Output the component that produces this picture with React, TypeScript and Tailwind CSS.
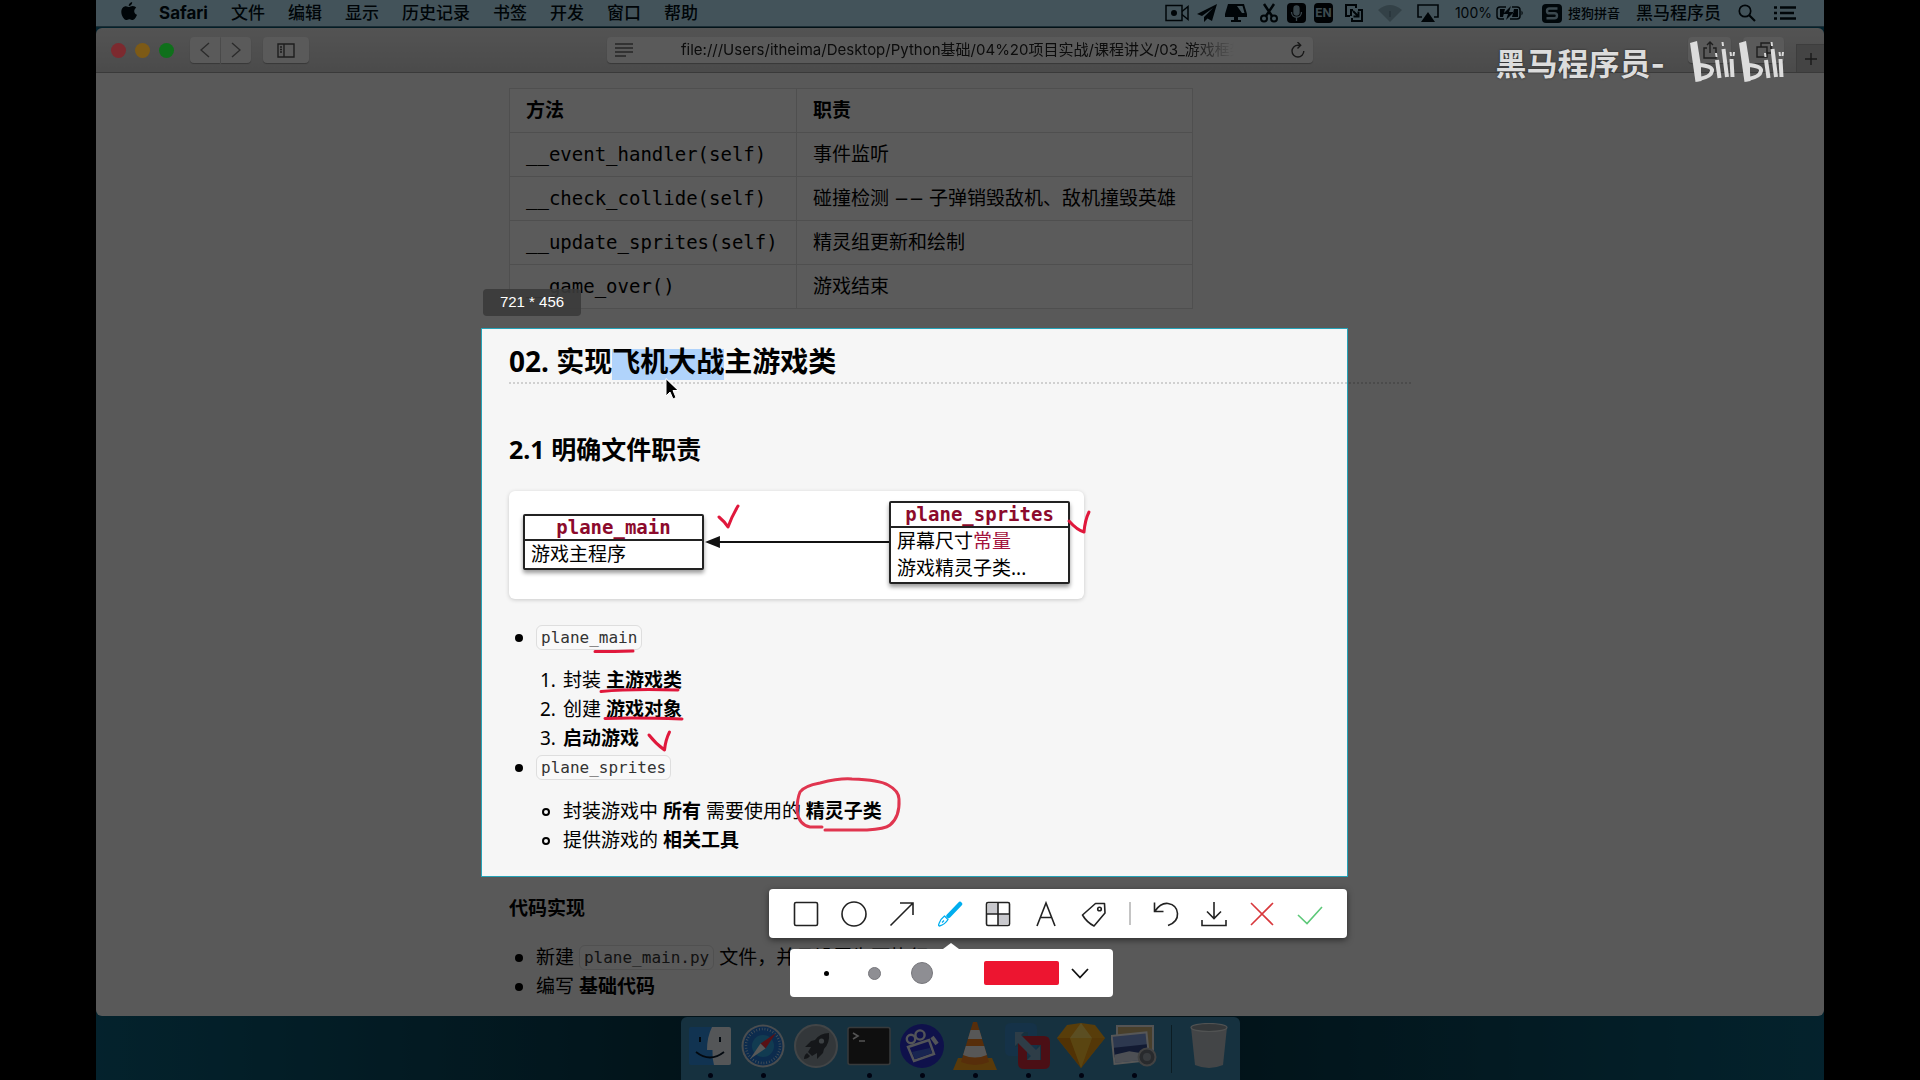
import type { ReactNode } from "react";

const MENUS = ["文件", "编辑", "显示", "历史记录", "书签", "开发", "窗口", "帮助"];

const METHODS: [string, ReactNode][] = [
  ["__event_handler(self)", "事件监听"],
  [
    "__check_collide(self)",
    <>
      碰撞检测 <span className="font-['DejaVu_Sans',sans-serif] text-[18px]">−−</span> 子弹销毁敌机、敌机撞毁英雄
    </>,
  ],
  ["__update_sprites(self)", "精灵组更新和绘制"],
  ["__game_over()", "游戏结束"],
];

const URL_TEXT =
  "file:///Users/itheima/Desktop/Python基础/04%20项目实战/课程讲义/03_游戏框架搭建.html";

function AppleLogo() {
  return (
    <svg viewBox="0 0 16 19" className="h-[19px] w-4" fill="currentColor" aria-hidden="true">
      <path d="M11.2 0c.2 1.900-1.500 4-3.500 4C7.400 2.200 9.200.2 11.200 0zM8.200 5c.7 0 1.800-1 3.500-1 1.600 0 2.800.8 3.500 1.800-2.900 1.700-2.500 5.800.8 7-.8 2.300-2.600 5.200-4.300 5.200-1.300 0-1.700-.8-3.300-.8s-2.100.8-3.300.8C3 18 .3 13.700.3 10.100.3 6.300 2.600 4.200 4.900 4.200 6.400 4.200 7.500 5 8.200 5z" />
    </svg>
  );
}

function MenuBar() {
  return (
    <header className="flex h-[27px] shrink-0 items-center border-b border-[#4b7c92] bg-[#bbe6f8] pl-[25px] pr-7 text-[17px] leading-[26px] text-[#001018]">
      <button aria-label="Apple" className="-mt-1">
        <AppleLogo />
      </button>
      <nav className="ml-[22px] flex items-center gap-[23px] whitespace-nowrap">
        <button className="font-bold">Safari</button>
        {MENUS.map((m) => (
          <button key={m} className="font-medium">
            {m}
          </button>
        ))}
      </nav>
      <div className="ml-auto flex items-center whitespace-nowrap">
        <svg viewBox="0 0 24 18" className="h-[18px] w-6" fill="none" stroke="currentColor" strokeWidth="1.500">
          <rect x="1" y="1.500" width="16" height="15" />
          <path d="M17 7.500l6-5v13l-6-5" />
          <circle cx="9" cy="9" r="3" fill="currentColor" stroke="none" />
        </svg>
        <svg viewBox="0 0 20 18" className="ml-2 h-[18px] w-5" fill="currentColor">
          <path d="M20 0L0 10l5 2L16 4 7 13v5l3.500-3.500L15 17z" />
        </svg>
        <svg viewBox="0 0 22 18" className="ml-2 h-[18px] w-[22px]" fill="currentColor">
          <path fillRule="evenodd" d="M3 0h16l3 10v3H0v-3zM12 2l5 7h2.500L17.500 2z" />
          <path d="M9 13h4v3h3v2H6v-2h3z" />
        </svg>
        <svg viewBox="0 0 18 20" className="ml-[13px] h-5 w-[18px]" fill="none" stroke="currentColor" strokeWidth="2">
          <circle cx="4" cy="15.500" r="3" />
          <circle cx="14" cy="15.500" r="3" />
          <path d="M6 13L14 1M12 13L4 1" strokeWidth="2.500" />
        </svg>
        <svg viewBox="0 0 19 20" className="ml-[9px] h-5 w-[19px]">
          <rect width="19" height="20" rx="4" fill="#00060c" />
          <g fill="none" stroke="#9cc0d0" strokeWidth="1.300">
            <rect x="7" y="3" width="5" height="9" rx="2.500" fill="#9cc0d0" />
            <path d="M4.500 9c0 7 10 7 10 0M9.500 14.500V18" />
          </g>
        </svg>
        <span className="ml-2 flex h-5 w-[19px] items-center justify-center rounded bg-[#00060c] text-[12px] font-bold text-[#a8ccdc]">
          EN
        </span>
        <svg viewBox="0 0 18 18" className="ml-3 h-[18px] w-[18px]" fill="none" stroke="currentColor" strokeWidth="2">
          <path d="M5 12H1V1h10v3M8 6H6v6M13 6h4v11H7v-3" />
          <path d="M8 7l5 5M13.500 7.500v5h-5" />
        </svg>
        <svg viewBox="0 0 24 17" className="ml-[15px] h-[17px] w-6 text-[#8fb4c4]" fill="currentColor">
          <path d="M0 5Q12-5 24 5L12 17z" />
          <path d="M12 6v6" stroke="#6b909f" strokeWidth="1.500" />
        </svg>
        <svg viewBox="0 0 22 18" className="ml-[15px] h-[18px] w-[22px]" fill="currentColor">
          <path d="M5 13H1V1h20v12h-4" fill="none" stroke="currentColor" strokeWidth="1.600" />
          <path d="M11 8l7 10H4z" />
        </svg>
        <span className="ml-4 text-[14px]">100%</span>
        <svg viewBox="0 0 28 14" className="ml-1 h-[14px] w-7" fill="currentColor">
          <path d="M10 1H4Q1 1 1 4v6q0 3 3 3h4M16 1h5q3 0 3 3v6q0 3-3 3h-7" fill="none" stroke="currentColor" strokeWidth="1.500" />
          <path d="M9 3H4v8h3zM18 3h4v8h-6zM15 0L7 8h5l-2 6 8-8h-5zM25.500 4.500q2.500 2.500 0 5z" />
        </svg>
        <svg viewBox="0 0 20 19" className="ml-[18px] h-[19px] w-5">
          <rect width="20" height="19" rx="4" fill="#00141e" />
          <path d="M15.500 4.500H7.500q-2.500 0-2.500 2.400t2.500 2.400h5q2.500 0 2.500 2.500t-2.500 2.500H4.500" fill="none" stroke="#a4cbdc" strokeWidth="2.400" />
        </svg>
        <span className="ml-[6px] text-[13px] font-medium">搜狗拼音</span>
        <span className="ml-4 font-medium">黑马程序员</span>
        <svg viewBox="0 0 18 18" className="ml-[17px] h-[18px] w-[18px]" fill="none" stroke="currentColor" strokeWidth="1.700">
          <circle cx="7" cy="7" r="5.700" />
          <path d="M11 11l6 6" strokeWidth="2.200" />
        </svg>
        <svg viewBox="0 0 22 14" className="ml-[18px] h-[14px] w-[22px]" stroke="currentColor" strokeWidth="2.400">
          <path d="M6 1.500h16M6 7h14M6 12.500h16M0 1.500h3M0 7h3M0 12.500h3" />
        </svg>
      </div>
    </header>
  );
}

function ToolbarButton({ label, className, children }: { label: string; className: string; children: ReactNode }) {
  return (
    <button
      aria-label={label}
      className={`flex h-[26px] items-center justify-center bg-[#f8f8f8] text-[#505050] shadow-[0_1px_1px_#9a9a9a] ${className}`}
    >
      {children}
    </button>
  );
}

function BrowserToolbar() {
  return (
    <div className="flex h-[45px] shrink-0 items-center border-b border-[#a2a2a2] bg-gradient-to-b from-[#e6e6e6] to-[#cfcfcf]">
      <div className="flex flex-1 items-center">
        <div className="relative z-20 ml-[15px] flex gap-[9px]">
          <button aria-label="关闭" className="size-[15px] rounded-full bg-[#7c2a2f]" />
          <button aria-label="最小化" className="size-[15px] rounded-full bg-[#7d5a16]" />
          <button aria-label="全屏" className="size-[15px] rounded-full bg-[#0f701b]" />
        </div>
        <div className="ml-4 flex gap-px">
          <ToolbarButton label="后退" className="w-[30px] rounded-l">
            <svg viewBox="0 0 10 16" className="h-4 w-[10px]" fill="none" stroke="#777" strokeWidth="1.400">
              <path d="M9 1L1 8l8 7" />
            </svg>
          </ToolbarButton>
          <ToolbarButton label="前进" className="w-[30px] rounded-r">
            <svg viewBox="0 0 10 16" className="h-4 w-[10px]" fill="none" stroke="#777" strokeWidth="1.400">
              <path d="M1 1l8 7-8 7" />
            </svg>
          </ToolbarButton>
        </div>
        <ToolbarButton label="边栏" className="ml-3 w-[46px] rounded">
          <svg viewBox="0 0 18 15" className="h-[15px] w-[18px]" fill="none" stroke="currentColor" strokeWidth="1.400">
            <path d="M1 1h16v13H1zM7 1v13M3 4h2M3 6.500h2M3 9h2" />
          </svg>
        </ToolbarButton>
      </div>
      <div className="flex h-[26px] w-[706px] items-center rounded bg-[#f8f8f8] shadow-[0_1px_1px_#9a9a9a]">
        <svg viewBox="0 0 18 14" className="ml-2 h-[14px] w-[18px]" stroke="#666" strokeWidth="1.500">
          <path d="M0 1h18M0 5h18M0 9h18M0 13h11" />
        </svg>
        <input
          aria-label="地址"
          readOnly
          value={URL_TEXT}
          className="ml-12 w-0 flex-1 bg-transparent text-[15px] text-[#222] [mask-image:linear-gradient(to_right,black_92%,transparent)]"
        />
        <button aria-label="重新载入" className="ml-[57px] mr-2">
          <svg viewBox="0 0 14 16" className="h-4 w-[14px]" fill="none" stroke="#444" strokeWidth="1.400">
            <path d="M12.800 9A5.900 5.900 0 1 1 7 3.200h2M6.500 0l3.200 3.200-3.200 3.200" />
          </svg>
        </button>
      </div>
      <div className="flex flex-1 items-center justify-end self-stretch">
        <ToolbarButton label="共享" className="w-[43px] rounded">
          <svg viewBox="0 0 14 18" className="h-[18px] w-[14px]" fill="none" stroke="currentColor" strokeWidth="1.400">
            <path d="M4 7H1v10h12V7h-3M7 12V1M4 4l3-3 3 3" />
          </svg>
        </ToolbarButton>
        <ToolbarButton label="标签页" className="ml-3 w-[41px] rounded">
          <svg viewBox="0 0 16 16" className="size-4" fill="none" stroke="currentColor" strokeWidth="1.400">
            <path d="M1 5h10v10H1zM5 5V1h10v10h-4" />
          </svg>
        </ToolbarButton>
        <button
          aria-label="新建标签页"
          className="ml-3 flex h-[28px] w-7 items-center justify-center self-end border-l border-t border-[#aaa] bg-[#bdbdbd] text-[#444]"
        >
          <svg viewBox="0 0 12 12" className="size-3" stroke="currentColor" strokeWidth="1.400">
            <path d="M6 0v12M0 6h12" />
          </svg>
        </button>
      </div>
    </div>
  );
}

function Code({ children }: { children: ReactNode }) {
  return (
    <code className="my-[2px] inline-block h-[25px] rounded-md border border-[#dedede] bg-[#f9f9f9] px-1 align-top font-['DejaVu_Sans_Mono','Noto_Sans_CJK_SC',monospace] text-[16px] leading-[23px] text-[#333]">
      {children}
    </code>
  );
}

function ClassBox({ name, children }: { name: string; children: ReactNode }) {
  return (
    <div className="w-[181px] shrink-0 rounded-xs border-2 border-[#222] bg-white shadow-[0_3px_4px_rgba(0,0,0,0.4)]">
      <div className="border-b-2 border-[#222] text-center font-['DejaVu_Sans_Mono',monospace] text-[19px] leading-[23px] font-bold text-[#8c0a2c]">
        {name}
      </div>
      <div className="pl-[6px] text-[19px] leading-[27px]">{children}</div>
    </div>
  );
}

function Dot() {
  return <span className="mt-[11px] mr-[13px] ml-[6px] size-2 shrink-0 rounded-full bg-black" />;
}

function Ring() {
  return <span className="mt-[11px] mr-[13px] ml-[6px] size-2 shrink-0 rounded-full border-2 border-black" />;
}

function Article() {
  return (
    <main className="flex-1 overflow-hidden bg-[#f6f6f6] pt-[15px] font-['Noto_Sans','Noto_Sans_CJK_SC',sans-serif] text-[19px] leading-[29px] text-black">
      <article className="mx-auto max-w-[902px]">
        <table className="border-collapse border border-[#dcdcdc] bg-[#fbfbfb] text-left">
          <thead>
            <tr className="h-11">
              <th className="w-[287px] border border-[#dcdcdc] px-4 font-bold">方法</th>
              <th className="border border-[#dcdcdc] px-4 font-bold">职责</th>
            </tr>
          </thead>
          <tbody>
            {METHODS.map(([name, duty]) => (
              <tr key={name} className="h-11 whitespace-nowrap">
                <td className="border border-[#dcdcdc] px-4 font-['DejaVu_Sans_Mono',monospace]">{name}</td>
                <td className="border border-[#dcdcdc] px-4">{duty}</td>
              </tr>
            ))}
          </tbody>
        </table>

        <h2 className="mt-8 border-b-2 border-dotted border-[#d0d0d0] pb-px text-[28px] leading-10 font-bold">
          02. 实现<mark className="bg-transparent bg-[linear-gradient(transparent_7px,#b0d3fb_7px)] text-black">飞机大战</mark>主游戏类
        </h2>
        <h3 className="mt-[47px] text-[25px] leading-9 font-bold">2.1 明确文件职责</h3>

        <figure className="mt-6 flex h-[108px] w-[575px] items-start rounded-md bg-white px-[14px] pt-[10px] shadow-[0_1px_4px_rgba(0,0,0,0.18)]">
          <div className="mt-[13px]">
            <ClassBox name="plane_main">游戏主程序</ClassBox>
          </div>
          <svg viewBox="0 0 186 14" className="mt-[34px] h-[14px] min-w-0 flex-1" aria-hidden="true">
            <path d="M14 7h172" stroke="#111" strokeWidth="2" />
            <path d="M1 7l15-6v12z" fill="#111" />
          </svg>
          <ClassBox name="plane_sprites">
            屏幕尺寸<span className="text-[#a3123c]">常量</span>
            <br />
            游戏精灵子类...
          </ClassBox>
        </figure>

        <ul className="mt-6">
          <li className="flex">
            <Dot />
            <div>
              <p className="h-[29px]">
                <Code>plane_main</Code>
              </p>
              <ol className="mt-[14px] [&_li]:flex">
                <li>
                  <span className="w-[27px] pl-1">1.</span>
                  <span>
                    封装 <strong>主游戏类</strong>
                  </span>
                </li>
                <li>
                  <span className="w-[27px] pl-1">2.</span>
                  <span>
                    创建 <strong>游戏对象</strong>
                  </span>
                </li>
                <li>
                  <span className="w-[27px] pl-1">3.</span>
                  <strong>启动游戏</strong>
                </li>
              </ol>
            </div>
          </li>
          <li className="flex">
            <Dot />
            <div>
              <p className="h-[29px]">
                <Code>plane_sprites</Code>
              </p>
              <ul className="mt-[15px] [&_li]:flex">
                <li>
                  <Ring />
                  <span>
                    封装游戏中 <strong>所有</strong> 需要使用的 <strong>精灵子类</strong>
                  </span>
                </li>
                <li>
                  <Ring />
                  <span>
                    提供游戏的 <strong>相关工具</strong>
                  </span>
                </li>
              </ul>
            </div>
          </li>
        </ul>

        <h4 className="mt-[39px] font-bold">代码实现</h4>
        <ul className="mt-5">
          <li className="flex">
            <Dot />
            <span className="h-[29px]">
              新建 <Code>plane_main.py</Code> 文件，并且设置为可执行
            </span>
          </li>
          <li className="flex">
            <Dot />
            <span>
              编写 <strong>基础代码</strong>
            </span>
          </li>
        </ul>
      </article>
    </main>
  );
}

function Finder() {
  return (
    <svg viewBox="0 0 44 44" className="size-11">
      <rect x="1" y="3" width="42" height="38" rx="2" fill="#2f8fe0" />
      <path d="M24 3h17q2 0 2 2v34q0 2-2 2H26q-2-7-1.500-15H19Q19 13 24 3z" fill="#e8eef4" />
      <path d="M12 13v5M32 13v5" stroke="#0a1a2c" strokeWidth="2" />
      <path d="M8 28q14 11 28 0" fill="none" stroke="#0a1a2c" strokeWidth="1.800" />
    </svg>
  );
}

function SafariIcon() {
  return (
    <svg viewBox="0 0 44 44" className="size-11">
      <circle cx="22" cy="22" r="21.500" fill="#ccd4da" />
      <circle cx="22" cy="22" r="19.500" fill="#2277d4" />
      <circle cx="22" cy="22" r="11" fill="#2fa5e0" />
      <circle cx="22" cy="22" r="17" fill="none" stroke="#bcdcf4" strokeWidth="2.500" strokeDasharray=".8 2" />
      <path d="M35 9L19.500 19.500l5 5z" fill="#f0303c" />
      <path d="M9 35l10.500-15.500 5 5z" fill="#f4f4f4" />
    </svg>
  );
}

function Launchpad() {
  return (
    <svg viewBox="0 0 44 44" className="size-11">
      <circle cx="22" cy="22" r="21" fill="#8f9aa0" stroke="#b8c0c4" strokeWidth="2" />
      <path d="M35 9q-9 0-14 7l-4 1-6 6 6 0-3 5 4 4 5-3v6l6-6 1-4q6-6 5-16z" fill="#3a4248" />
      <circle cx="27.500" cy="17" r="2.600" fill="#a8b4bc" />
      <path d="M13 29q-3 2-3 6 4 0 6-3z" fill="#3a4248" />
    </svg>
  );
}

function Terminal() {
  return (
    <svg viewBox="0 0 44 44" className="size-11">
      <rect x="1" y="3.500" width="42" height="37" rx="2" fill="#2a2a2a" stroke="#9aa0a4" strokeWidth="1.500" />
      <path d="M6 9l5 3-5 3M12 17h6" fill="none" stroke="#e8e8e8" strokeWidth="1.600" />
    </svg>
  );
}

function Camcorder() {
  return (
    <svg viewBox="0 0 44 44" className="size-11">
      <circle cx="22" cy="22" r="22" fill="#2a2fd0" />
      <g fill="none" stroke="#e4e8f4" strokeWidth="2.400">
        <circle cx="11" cy="15" r="4.200" />
        <circle cx="20" cy="11" r="4.600" />
        <path d="M8 23l21-7 5 14-20 7z" />
        <path d="M32 13l5 7" strokeWidth="4" />
      </g>
      <path d="M12 28l18-4 2 5-17 6z" fill="#4468e0" />
    </svg>
  );
}

function Cone() {
  return (
    <svg viewBox="0 0 44 48" className="h-12 w-11">
      <path d="M5 36h34l5 12H0z" fill="#f5a01c" />
      <path d="M20 0h4l12 40q-14 6-28 0z" fill="#f08020" />
      <path d="M17.600 8h8.800l2.700 9H14.900zM12.800 24h18.400l2.700 9q-12 5-23.800 0z" fill="#f2f2f2" />
    </svg>
  );
}

function Vmware() {
  return (
    <svg viewBox="0 0 46 46" className="h-[46px] w-[46px]">
      <path fillRule="evenodd" d="M6 0h20q6 0 6 6v21q0 6-6 6H6q-6 0-6-6V6q0-6 6-6zM10 9v15h13V9z" fill="#3a8ac8" />
      <path fillRule="evenodd" d="M19 13h20q6 0 6 6v21q0 6-6 6H19q-6 0-6-6V19q0-6 6-6zM22 22v15h14V22z" fill="#d02c3c" />
      <path d="M10 9h9l-3 3 15 15 4-4v14H22l4-4-13-13-3 3z" fill="#7fa8c4" />
    </svg>
  );
}

function Diamond() {
  return (
    <svg viewBox="0 0 48 46" className="h-[46px] w-12">
      <path d="M10 2L24 0l14 2 10 13-24 30L0 15z" fill="#f4a81c" />
      <path d="M24 0l11 15H13z" fill="#fcd860" />
      <path d="M0 15h13l11 30z" fill="#e08c10" />
      <path d="M48 15H35L24 45z" fill="#e89814" />
      <path d="M13 15h22L24 45z" fill="#f8c030" />
    </svg>
  );
}

function Preview() {
  return (
    <svg viewBox="0 0 46 44" className="h-11 w-[46px]">
      <rect x="6" y="2" width="36" height="26" fill="#c8b078" stroke="#e8e8e8" strokeWidth="2" />
      <g transform="rotate(-6 20 24)">
        <rect x="1" y="9" width="37" height="30" fill="#f0f0f0" />
        <rect x="3" y="11" width="33" height="26" fill="#7c9cdc" />
        <path d="M3 22h33v8l-33 2z" fill="#34488c" />
        <path d="M3 29l15-2 18 5v5H3z" fill="#d4dce8" />
      </g>
      <circle cx="36" cy="33" r="8.500" fill="#70747c" stroke="#b8b8b8" strokeWidth="2" />
      <circle cx="36" cy="33" r="4" fill="#9ca4ac" />
    </svg>
  );
}

function Trash() {
  return (
    <svg viewBox="0 0 38 46" className="h-[46px] w-[38px]">
      <path d="M1 4h36l-4 38q-14 6-28 0z" fill="#b9c0c4" />
      <ellipse cx="19" cy="4.500" rx="18" ry="4" fill="#949ca0" stroke="#dde2e4" strokeWidth="1.200" />
    </svg>
  );
}

const DOCK = [
  { name: "Finder", icon: <Finder />, open: true },
  { name: "Safari", icon: <SafariIcon />, open: true },
  { name: "Launchpad", icon: <Launchpad />, open: false },
  { name: "Terminal", icon: <Terminal />, open: true },
  { name: "录屏", icon: <Camcorder />, open: true },
  { name: "VLC", icon: <Cone />, open: true },
  { name: "VMware", icon: <Vmware />, open: true },
  { name: "Sketch", icon: <Diamond />, open: true },
  { name: "预览", icon: <Preview />, open: true },
];

function Dock() {
  return (
    <footer className="flex h-16 shrink-0 justify-center pt-px">
      <div className="flex rounded-t-md bg-[#3d88b0] px-[3px]">
        {DOCK.map((app) => (
          <button key={app.name} aria-label={app.name} className="flex w-[53px] flex-col items-center pt-1">
            <span className="flex h-[50px] items-center">{app.icon}</span>
            {app.open && <span className="mt-[2px] size-[5px] rounded-full bg-[#000a30]" />}
          </button>
        ))}
        <span className="mx-[10px] mt-2 h-12 w-px bg-[#235065]" />
        <button aria-label="废纸篓" className="flex w-[55px] justify-center pt-[6px]">
          <Trash />
        </button>
      </div>
    </footer>
  );
}

function Tool({ label, color = "text-[#222]", children }: { label: string; color?: string; children: ReactNode }) {
  return (
    <button aria-label={label} className={`flex h-full w-12 items-center justify-center ${color}`}>
      <svg viewBox="0 0 26 26" className="size-[26px]" fill="none" stroke="currentColor" strokeWidth="1.600">
        {children}
      </svg>
    </button>
  );
}

function AnnotationToolbar() {
  return (
    <div className="absolute top-full right-0 mt-[13px] flex h-[49px] items-center rounded bg-white px-[13px] shadow-[0_2px_6px_rgba(0,0,0,0.5)]">
      <Tool label="矩形">
        <rect x="1.500" y="1.500" width="23" height="23" rx="1.500" />
      </Tool>
      <Tool label="椭圆">
        <circle cx="13" cy="13" r="12" />
      </Tool>
      <Tool label="箭头">
        <path d="M1.500 24.500L24 2M11 2h13v12" />
      </Tool>
      <Tool label="画笔" color="text-[#00aeef]">
        <path d="M23 3L11.500 15" strokeWidth="4.500" strokeLinecap="round" />
        <path d="M7.500 15l3.500 3.500q-3 5-8.500 6.500-1.500 0-.5-2.500 1.500-4.500 5.500-7.500zM5 21.500l2-2" strokeWidth="1.300" />
      </Tool>
      <Tool label="马赛克">
        <rect x="3" y="3" width="10" height="10" fill="#c9c9ce" stroke="none" />
        <rect x="13" y="13" width="10" height="10" fill="#c9c9ce" stroke="none" />
        <rect x="1.500" y="1.500" width="23" height="23" rx="1.500" />
        <path d="M13 1.500v23M1.500 13h23" />
      </Tool>
      <Tool label="文字">
        <path d="M4 25l9-23 9 23M7.500 16.500h11" />
      </Tool>
      <Tool label="标签">
        <path d="M23.500 2.500l-9 0L1.500 14q4 7 11.500 11L24 12z" strokeLinejoin="round" />
        <circle cx="18.500" cy="8" r="1.800" />
      </Tool>
      <span className="flex w-6 justify-center">
        <span className="h-[23px] w-[2px] bg-[#c4c4c4]" />
      </span>
      <Tool label="撤销">
        <path d="M1.500 1.500v9h9M2 10Q8 1.500 15 2.500q9 1.500 9.500 10T15 24.500" />
      </Tool>
      <Tool label="保存">
        <path d="M13 1v16M6 10.500l7 7 7-7M1 19v5.500h24V19" />
      </Tool>
      <Tool label="取消" color="text-[#d8383c]">
        <path d="M2 2l22 22M24 2L2 24" />
      </Tool>
      <Tool label="完成" color="text-[#5cc878]">
        <path d="M1 14l9 8.500L25 6" />
      </Tool>
    </div>
  );
}

function BrushPanel() {
  return (
    <div className="absolute top-full left-[308px] mt-[73px] flex h-12 items-center rounded bg-white pl-3">
      <span className="absolute -top-[6px] left-[153px] border-x-[8px] border-b-[6px] border-x-transparent border-b-white" />
      <button aria-label="细" className="flex w-12 justify-center">
        <span className="size-[5px] rounded-full bg-black" />
      </button>
      <button aria-label="中" className="flex w-12 justify-center">
        <span className="size-[13px] rounded-full border border-[#77777c] bg-[#8e8e93]" />
      </button>
      <button aria-label="粗" className="flex w-12 justify-center">
        <span className="size-[22px] rounded-full border border-[#77777c] bg-[#8e8e93]" />
      </button>
      <button aria-label="颜色" className="ml-[38px] h-6 w-[75px] rounded-xs bg-[#ed1530]" />
      <button aria-label="更多颜色" className="mr-6 ml-3">
        <svg viewBox="0 0 18 11" className="h-[11px] w-[18px]" fill="none" stroke="#111" strokeWidth="1.800">
          <path d="M1 1l8 8.500L17 1" />
        </svg>
      </button>
    </div>
  );
}

function Capture() {
  return (
    <section
      aria-label="截图区域"
      className="absolute top-[328px] left-[385px] z-10 h-[549px] w-[867px] border border-[#25a3b8] shadow-[0_0_0_9999px_rgba(0,0,0,0.64)]"
    >
      <span className="absolute bottom-full left-px mb-[13px] flex h-[27px] w-[98px] items-center justify-center rounded bg-[#3a3a3a]/90 font-['Liberation_Sans',sans-serif] text-[15px] text-white">
        721 * 456
      </span>
      <svg
        viewBox="482 329 865 547"
        className="absolute inset-0 size-full"
        fill="none"
        stroke="#e0183c"
        strokeWidth="3"
        strokeLinecap="round"
        strokeLinejoin="round"
        aria-hidden="true"
      >
        <path d="M719 517q6 5 9 10 4-11 10-21" />
        <path d="M1069 521q8 9 15 11 1-12 5-20" />
        <path d="M595 651.500q20 0 38-.5" />
        <path d="M601 691.500q30-3 77-1.500" />
        <path d="M605 718.500q30-1 77 .500" />
        <path d="M649 735q7 9 15.500 15 1-10 5-18" />
        <path d="M822 827h-12q-11-2-13-16 0-12 3-19 4-6 20-9 20-5 32-4 28 1 36 6 11 6 11 14 1 18-9 26-5 4-23 5h-42" stroke="#e0354f" />
        <path d="M666 379v17l4-4 3 7 3-1.500-3-7h5z" fill="#000" stroke="#fff" strokeWidth="1" />
      </svg>
      <AnnotationToolbar />
      <BrushPanel />
    </section>
  );
}

function Watermark() {
  return (
    <div className="pointer-events-none absolute top-[40px] right-10 z-30 flex items-center gap-6 text-[#dcdcdc]">
      <span className="mt-1 text-[31px] leading-10 font-bold [text-shadow:0_0_2px_#222]">黑马程序员-</span>
      <svg
        viewBox="0 0 95 42"
        className="h-[42px] w-[95px]"
        fill="currentColor"
        stroke="currentColor"
        role="img"
        aria-label="bilibili"
      >
        <g id="half">
          <path d="M1 2L8 0l3.500 22 1 18-6 1z" stroke="none" />
          <path d="M10 24q14 1 13 6-1 6-13 8z" fill="none" strokeWidth="4" />
          <path d="M28 19l2.500 18M34.500 8L38 36M42.500 18l1 18" fill="none" strokeWidth="4" />
          <path d="M27 12l.5 4M33.500 1l.5 4M41.500 11l.5 4M45 11l-.5 4" fill="none" strokeWidth="2" />
        </g>
        <use href="#half" x="49" />
      </svg>
    </div>
  );
}

export default function App() {
  return (
    <div className="h-screen bg-black px-24">
      <div className="relative flex h-full flex-col overflow-hidden bg-[linear-gradient(to_right,#0c607c,#06303f_40%,#06303f_60%,#0c607c)] font-['Inter','Noto_Sans_CJK_SC',sans-serif]">
        <MenuBar />
        <div className="mt-px flex min-h-0 flex-1 flex-col overflow-hidden rounded-md">
          <BrowserToolbar />
          <Article />
        </div>
        <Dock />
        <Capture />
        <Watermark />
      </div>
    </div>
  );
}
